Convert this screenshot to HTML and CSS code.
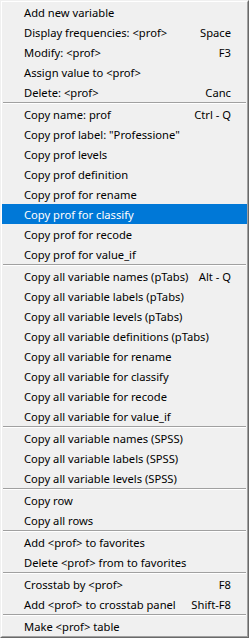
FILE: index.html
```html
<!DOCTYPE html>
<html lang="en">
<head>
    <meta charset="UTF-8">
    <meta name="viewport" content="width=device-width, initial-scale=1.0">
    <title>Variable menu</title>
    <link rel="stylesheet" href="styles.css">
</head>
<body>
    <div class="menu">
        <ul class="menu-list">
            <li class="item"><span>Add new variable</span></li>
            <li class="item"><span>Display frequencies: &lt;prof&gt;</span><span class="key">Space</span></li>
            <li class="item"><span>Modify: &lt;prof&gt;</span><span class="key">F3</span></li>
            <li class="item"><span>Assign value to &lt;prof&gt;</span></li>
            <li class="item"><span>Delete: &lt;prof&gt;</span><span class="key">Canc</span></li>
            <li class="sep"></li>

            <li class="item"><span>Copy name: prof</span><span class="key">Ctrl - Q</span></li>
            <li class="item"><span>Copy prof label: "Professione"</span></li>
            <li class="item"><span>Copy prof levels</span></li>
            <li class="item"><span>Copy prof definition</span></li>
            <li class="item"><span>Copy prof for rename</span></li>
            <li class="item active"><span>Copy prof for classify</span></li>
            <li class="item"><span>Copy prof for recode</span></li>
            <li class="item"><span>Copy prof for value_if</span></li>
            <li class="sep"></li>

            <li class="item"><span>Copy all variable names (pTabs)</span><span class="key">Alt - Q</span></li>
            <li class="item"><span>Copy all variable labels (pTabs)</span></li>
            <li class="item"><span>Copy all variable levels (pTabs)</span></li>
            <li class="item"><span>Copy all variable definitions (pTabs)</span></li>
            <li class="item"><span>Copy all variable for rename</span></li>
            <li class="item"><span>Copy all variable for classify</span></li>
            <li class="item"><span>Copy all variable for recode</span></li>
            <li class="item"><span>Copy all variable for value_if</span></li>
            <li class="sep"></li>

            <li class="item"><span>Copy all variable names (SPSS)</span></li>
            <li class="item"><span>Copy all variable labels (SPSS)</span></li>
            <li class="item"><span>Copy all variable levels (SPSS)</span></li>
            <li class="sep"></li>

            <li class="item"><span>Copy row</span></li>
            <li class="item"><span>Copy all rows</span></li>
            <li class="sep"></li>

            <li class="item"><span>Add &lt;prof&gt; to favorites</span></li>
            <li class="item"><span>Delete &lt;prof&gt; from to favorites</span></li>
            <li class="sep"></li>

            <li class="item"><span>Crosstab by &lt;prof&gt;</span><span class="key">F8</span></li>
            <li class="item"><span>Add &lt;prof&gt; to crosstab panel</span><span class="key">Shift-F8</span></li>
            <li class="sep"></li>

            <li class="item"><span>Make &lt;prof&gt; table</span></li>
        </ul>
    </div>
</body>
</html>
```

FILE: styles.css
```css
body {
    margin: 0;
    background: #f0f0f0;
    font-family: "Noto Sans", "Open Sans", sans-serif;
    font-size: 11.2px;
    color: #000;
}

/* classic two-tone window border */
.menu {
    width: 249px;
    height: 638px;
    box-sizing: border-box;
    background: #f0f0f0;
    border-top: 1px solid #f0f0f0;
    border-left: 1px solid #f0f0f0;
    border-right: 1px solid #696969;
    border-bottom: 1px solid #696969;
}

.menu-list {
    list-style: none;
    margin: 0;
    padding: 0;
    height: 100%;
    box-sizing: border-box;
    border-top: 1px solid #fff;
    border-left: 1px solid #fff;
    border-right: 1px solid #a0a0a0;
    border-bottom: 1px solid #a0a0a0;
}

.item {
    display: flex;
    justify-content: space-between;
    align-items: center;
    height: 20px;
    padding: 0 16px 0 22px;
    white-space: nowrap;
}

.item .key {
    padding-left: 8px;
}

.item.active {
    background: #0078d7;
    color: #fff;
}

.sep {
    margin: 0 1px;
    border-top: 1px solid #a0a0a0;
    border-bottom: 1px solid #fff;
}
```
